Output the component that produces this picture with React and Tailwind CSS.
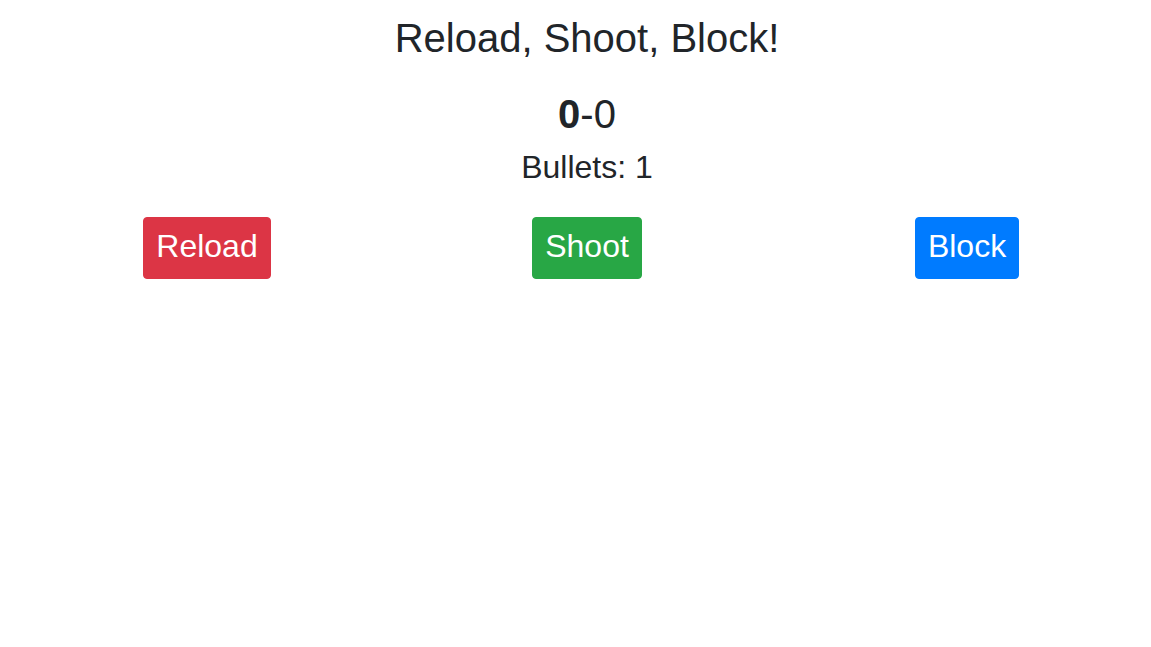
import React, { useState } from "react";

const App = () => {
  const [score] = useState({ me: 0, them: 0 });
  const [bullets] = useState(1);

  const buttons = [
    { label: "Reload", cls: "bg-[#dc3545] border-[#dc3545]" },
    { label: "Shoot", cls: "bg-[#28a745] border-[#28a745]" },
    { label: "Block", cls: "bg-[#007bff] border-[#007bff]" },
  ];

  return (
    <div
      className="min-h-screen bg-white text-[#212529]"
      style={{ fontFamily: '"Liberation Sans", Arial, sans-serif' }}
    >
      <div className="w-[1140px] ml-[17px] text-center">
        <h1 className="pt-[14px] text-[40px] leading-[48px]">Reload, Shoot, Block!</h1>
        <div className="mt-[28px] text-[40px] leading-[48px]">
          <span className="font-bold">{score.me}</span>-{score.them}
        </div>
        <h2 className="mt-[10px] text-[32px] leading-[38px]">Bullets: {bullets}</h2>
        <div className="grid grid-cols-3 mt-[31px]">
          {buttons.map((b) => (
            <div key={b.label} className="flex justify-center">
              <button
                className={`${b.cls} border text-white text-[32px] leading-[48px] px-[12px] pt-[4px] pb-[8px] rounded-[4px]`}
              >
                {b.label}
              </button>
            </div>
          ))}
        </div>
      </div>
    </div>
  );
};

export default App;
